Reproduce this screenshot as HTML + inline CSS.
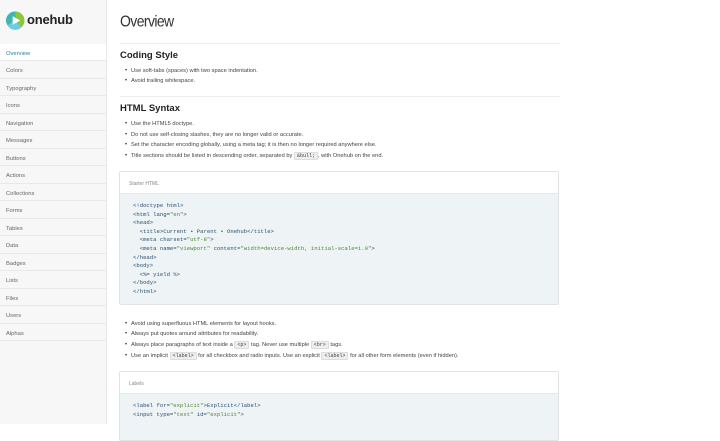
<!DOCTYPE html>
<html><head><meta charset="utf-8"><style>
*{margin:0;padding:0;box-sizing:border-box}
body{width:720px;height:424px;overflow:hidden;background:#fff;font-family:"Liberation Sans",sans-serif;color:#333;position:relative}
.side{position:absolute;left:0;top:0;width:107px;height:424px;background:#f7f7f7;border-right:1px solid #e6e6e6}
.logo{position:absolute;left:6px;top:11px}
.logotext{position:absolute;left:27px;top:12px;font-size:13px;font-weight:bold;color:#222;letter-spacing:-0.2px}
.nav{position:absolute;top:43.5px;left:0;width:106px}
.nav div{height:17.5px;line-height:18px;padding-top:1px;font-size:5.8px;color:#666;padding-left:6px;border-bottom:1px solid #e9e9e9}
.nav div.a{background:#fff;color:#2a7fa0}
.main{position:absolute;left:120px;top:0;width:440px}
h1{position:absolute;top:12px;font-size:14px;font-weight:normal;color:#333;letter-spacing:-0.6px;transform:scaleY(1.12);transform-origin:top left}
.hr{position:absolute;left:0;width:440px;height:1px;background:#ececec}
h2{position:absolute;font-size:9.5px;font-weight:bold;color:#222;margin-top:2px}
.li{position:absolute;left:5px;font-size:5.7px;color:#444;white-space:nowrap;margin-top:2px}
.li:before{content:"•";position:absolute;left:-0px;font-size:6px}
.li span.t{padding-left:6px}
code{font-family:"Liberation Mono",monospace;font-size:5px;background:#eee;border:1px solid #ddd;padding:0 2px;border-radius:1px}
.box{position:absolute;left:-1px;width:440px;border:1px solid #e3e3e3;border-radius:2px;background:#eef3f6;overflow:hidden}
.box .h{height:22px;background:#fff;border-bottom:1px solid #e8e8e8;font-size:5px;color:#888;padding:9px 0 0 9px}
pre{font-family:"Liberation Mono",monospace;font-size:5.6px;line-height:8.6px;color:#2c5070;padding:8px 0 0 13px}
.s{color:#4b8a2e}
</style></head><body>
<div class="side">
<svg class="logo" width="19" height="19" viewBox="0 0 20 20">
<circle cx="10" cy="10" r="9.5" fill="#8cc63f"/>
<path d="M10 .5A9.5 9.5 0 0 0 1.5 15L10 10Z" fill="#3fb6b0"/>
<path d="M1.5 15A9.5 9.5 0 0 0 16 17.5L10 10Z" fill="#6ccbe5"/>
<path d="M7 5.5L15 10L7 14.5Z" fill="#fff"/>
</svg>
<div class="logotext">onehub</div>
<div class="nav">
<div class="a">Overview</div><div>Colors</div><div>Typography</div><div>Icons</div><div>Navigation</div><div>Messages</div><div>Buttons</div><div>Actions</div><div>Collections</div><div>Forms</div><div>Tables</div><div>Data</div><div>Badges</div><div>Lists</div><div>Files</div><div>Users</div><div>Alphas</div>
</div>
</div>
<div class="main">
<h1>Overview</h1>
<div class="hr" style="top:43px"></div>
<h2 style="top:48px">Coding Style</h2>
<div class="li" style="top:66px"><span class="t">Use soft-tabs (spaces) with two space indentation.</span></div>
<div class="li" style="top:76px"><span class="t">Avoid trailing whitespace.</span></div>
<div class="hr" style="top:96px"></div>
<h2 style="top:101px">HTML Syntax</h2>
<div class="li" style="top:119px"><span class="t">Use the HTML5 doctype.</span></div>
<div class="li" style="top:130px"><span class="t">Do not use self-closing slashes, they are no longer valid or accurate.</span></div>
<div class="li" style="top:140px"><span class="t">Set the character encoding globally, using a meta tag; it is then no longer required anywhere else.</span></div>
<div class="li" style="top:151px"><span class="t">Title sections should be listed in descending order, separated by <code>&amp;bull;</code>, with Onehub on the end.</span></div>
<div class="box" style="top:171px;height:134px"><div class="h">Starter HTML</div>
<pre>&lt;!doctype html&gt;
&lt;html lang=<span class="s">"en"</span>&gt;
&lt;head&gt;
  &lt;title&gt;Current • Parent • Onehub&lt;/title&gt;
  &lt;meta charset=<span class="s">"utf-8"</span>&gt;
  &lt;meta name=<span class="s">"viewport"</span> content=<span class="s">"width=device-width, initial-scale=1.0"</span>&gt;
&lt;/head&gt;
&lt;body&gt;
  &lt;%= yield %&gt;
&lt;/body&gt;
&lt;/html&gt;</pre></div>
<div class="li" style="top:319px"><span class="t">Avoid using superfluous HTML elements for layout hooks.</span></div>
<div class="li" style="top:329px"><span class="t">Always put quotes around attributes for readability.</span></div>
<div class="li" style="top:340px"><span class="t">Always place paragraphs of text inside a <code>&lt;p&gt;</code> tag. Never use multiple <code>&lt;br&gt;</code> tags.</span></div>
<div class="li" style="top:351px"><span class="t">Use an implicit <code>&lt;label&gt;</code> for all checkbox and radio inputs. Use an explicit <code>&lt;label&gt;</code> for all other form elements (even if hidden).</span></div>
<div class="box" style="top:371px;height:70px"><div class="h">Labels</div>
<pre>&lt;label for=<span class="s">"explicit"</span>&gt;Explicit&lt;/label&gt;
&lt;input type=<span class="s">"text"</span> id=<span class="s">"explicit"</span>&gt;</pre></div>
</div>
</body></html>
